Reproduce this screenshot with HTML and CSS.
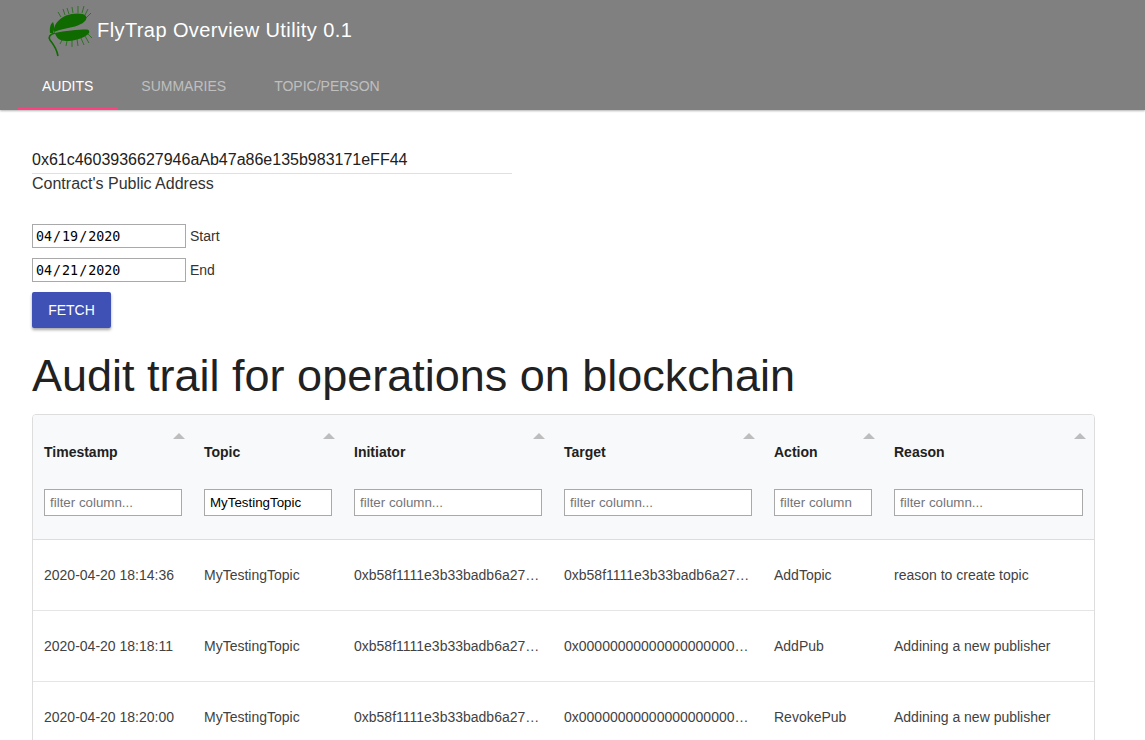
FILE: index.html
```html
<!doctype html>
<html lang="en">
  <head>
    <title>FlyTrap Overview Utility 0.1</title>
    <link rel="stylesheet" href="styles.css">
  </head>

  <body>
    <header class="appbar">
      <div class="brand">
        <svg class="logo" viewBox="0 0 60 60" width="60" height="60">
          <!-- teeth -->
          <path class="teeth" d="M21 17L18 12M25 15L23 9M29 14L27 8M33 13L32 7M38 13L38 6M42 13L44 6M45 15L48 9M46 18L51 13M22 40L20 44M27 41L26 46M32 40L32 47M37 39L38 46M41 38L44 45M45 36L49 43M48 34L52 38" />
          <!-- lobes -->
          <path class="leaf" d="M14 32C13 26 18 19 26 15.500C33 13 43 12.500 46 16C48 20 43 24 35 26.500C27 28.500 20 29.500 14 32Z" />
          <path class="leaf" d="M15 33C24 31 38 29.500 47 29.500C50 30 50 33 47 35C41 39 33 41 26 41C20 41 16 38 15 33Z" />
          <!-- small leaf and stem -->
          <path class="leaf" d="M13 22C10 24 9.500 29 10 33L13 33C14.500 29 14.500 25 13 22Z" />
          <path class="stem" d="M15 33C10 34 8 37 10 40C14 45 17 50 18 56" />
        </svg>
        <span class="brand-title">FlyTrap Overview Utility 0.1</span>
      </div>
      <nav class="tabs">
        <a class="tab tab-active">Audits</a>
        <a class="tab">Summaries</a>
        <a class="tab">Topic/Person</a>
      </nav>
    </header>

    <main class="content">
      <div class="address-field">
        <input class="address-input" type="text" value="0x61c4603936627946aAb47a86e135b983171eFF44">
        <label class="address-label">Contract's Public Address</label>
      </div>

      <div class="date-row">
        <input class="date-input" type="date" value="2020-04-19">
        <label>Start</label>
      </div>
      <div class="date-row">
        <input class="date-input" type="date" value="2020-04-21">
        <label>End</label>
      </div>
      <button class="fetch-btn">Fetch</button>

      <h1 class="page-title">Audit trail for operations on blockchain</h1>

      <div class="table-wrap">
        <table class="audit-table">
          <colgroup>
            <col class="col-time">
            <col class="col-topic">
            <col class="col-addr">
            <col class="col-addr">
            <col class="col-action">
            <col>
          </colgroup>
          <thead>
            <tr>
              <th><span class="sort-arrow"></span>Timestamp<input class="filter" placeholder="filter column..."></th>
              <th><span class="sort-arrow"></span>Topic<input class="filter" value="MyTestingTopic"></th>
              <th><span class="sort-arrow"></span>Initiator<input class="filter" placeholder="filter column..."></th>
              <th><span class="sort-arrow"></span>Target<input class="filter" placeholder="filter column..."></th>
              <th><span class="sort-arrow"></span>Action<input class="filter" placeholder="filter column"></th>
              <th><span class="sort-arrow"></span>Reason<input class="filter" placeholder="filter column..."></th>
            </tr>
          </thead>
          <tbody>
            <tr>
              <td>2020-04-20 18:14:36</td>
              <td>MyTestingTopic</td>
              <td>0xb58f1111e3b33badb6a27c4e19a0d2f7c6b8e513</td>
              <td>0xb58f1111e3b33badb6a27c4e19a0d2f7c6b8e513</td>
              <td>AddTopic</td>
              <td>reason to create topic</td>
            </tr>
            <tr>
              <td>2020-04-20 18:18:11</td>
              <td>MyTestingTopic</td>
              <td>0xb58f1111e3b33badb6a27c4e19a0d2f7c6b8e513</td>
              <td>0x0000000000000000000000000000000000000000</td>
              <td>AddPub</td>
              <td>Addining a new publisher</td>
            </tr>
            <tr>
              <td>2020-04-20 18:20:00</td>
              <td>MyTestingTopic</td>
              <td>0xb58f1111e3b33badb6a27c4e19a0d2f7c6b8e513</td>
              <td>0x0000000000000000000000000000000000000000</td>
              <td>RevokePub</td>
              <td>Addining a new publisher</td>
            </tr>
          </tbody>
        </table>
      </div>
    </main>
  </body>
</html>
```

FILE: styles.css
```css
html {
  overflow: hidden;
}

body {
  margin: 0;
  height: 740px;
  overflow: hidden;
  font-family: "Liberation Sans", Arial, sans-serif;
  font-size: 14px;
  color: #212121;
  background: #fff;
}

.appbar {
  height: 110px;
  background: #808080;
  box-shadow: 0 1px 2px rgba(0, 0, 0, 0.3);
}

.brand {
  display: flex;
  align-items: center;
  height: 60px;
  padding-left: 40px;
}

.logo {
  flex: none;
  margin-right: -3px;
}

.leaf {
  fill: #0f6a00;
}

.teeth,
.stem {
  fill: none;
  stroke: #0f6a00;
}

.teeth {
  stroke-width: 0.7;
}

.stem {
  stroke-width: 1.6;
}

.brand-title {
  font-size: 20px;
  letter-spacing: 0.41px;
  color: #fff;
}

.tabs {
  display: flex;
  height: 48px;
  margin-top: 2px;
  padding-left: 18px;
}

.tab {
  box-sizing: border-box;
  padding: 16px 24px 0;
  font-size: 14px;
  text-transform: uppercase;
  color: rgba(255, 255, 255, 0.5);
}

.tab-active {
  color: #fff;
  border-bottom: 2px solid #ff4081;
}

.content {
  padding: 40px 32px 0;
}

.address-field {
  width: 480px;
  margin-bottom: 30px;
}

.address-input {
  display: block;
  box-sizing: border-box;
  width: 100%;
  height: 24px;
  padding: 0 0 4px;
  border: 0;
  border-bottom: 1px solid #e0e0e0;
  outline: none;
  font-family: inherit;
  font-size: 16px;
  color: #212121;
}

.address-label {
  display: block;
  font-size: 16px;
  line-height: 20px;
  color: #333;
}

.date-row {
  display: flex;
  align-items: center;
  gap: 4px;
  margin-bottom: 10px;
  color: #333;
}

.date-input {
  box-sizing: border-box;
  width: 154px;
  height: 24px;
  padding: 0 2px;
  border: 1px solid #a9a9a9;
  font-family: "DejaVu Sans Mono", monospace;
  font-size: 13.33px;
  color: #000;
}

.date-input::-webkit-calendar-picker-indicator {
  display: none;
}

.fetch-btn {
  display: block;
  width: 79px;
  height: 36px;
  padding: 0;
  border: 0;
  border-radius: 2px;
  background: #3f51b5;
  box-shadow: 0 2px 3px rgba(0, 0, 0, 0.35);
  font-family: inherit;
  font-size: 14px;
  text-transform: uppercase;
  color: #fff;
}

.page-title {
  margin: 20px 0 10px;
  font-size: 45px;
  font-weight: 400;
  line-height: 56px;
  color: #212121;
}

.table-wrap {
  width: 1061px;
  border: 1px solid #ddd;
  border-radius: 4px;
  overflow: hidden;
}

.audit-table {
  width: 100%;
  table-layout: fixed;
  border-collapse: collapse;
}

.col-time {
  width: 160px;
}

.col-topic {
  width: 150px;
}

.col-addr {
  width: 210px;
}

.col-action {
  width: 120px;
}

.audit-table th {
  position: relative;
  padding: 29px 11px 23px;
  background: #f8f9fa;
  border-bottom: 1px solid #ddd;
  font-size: 14px;
  line-height: 16px;
  text-align: left;
  color: #212121;
}

.sort-arrow {
  position: absolute;
  top: 18px;
  right: 8px;
  border-left: 6px solid transparent;
  border-right: 6px solid transparent;
  border-bottom: 6px solid #bdbdbd;
}

.filter {
  display: block;
  box-sizing: border-box;
  width: 100%;
  height: 27px;
  margin-top: 29px;
  padding: 0 5px;
  border: 1px solid #a9a9a9;
  font-family: inherit;
  font-size: 13.33px;
  font-weight: 400;
  color: #000;
}

.filter::placeholder {
  color: #757575;
}

.audit-table td {
  height: 70px;
  padding: 0 11px;
  border-bottom: 1px solid #e5e5e5;
  overflow: hidden;
  white-space: nowrap;
  text-overflow: ellipsis;
  color: #424242;
}
```
